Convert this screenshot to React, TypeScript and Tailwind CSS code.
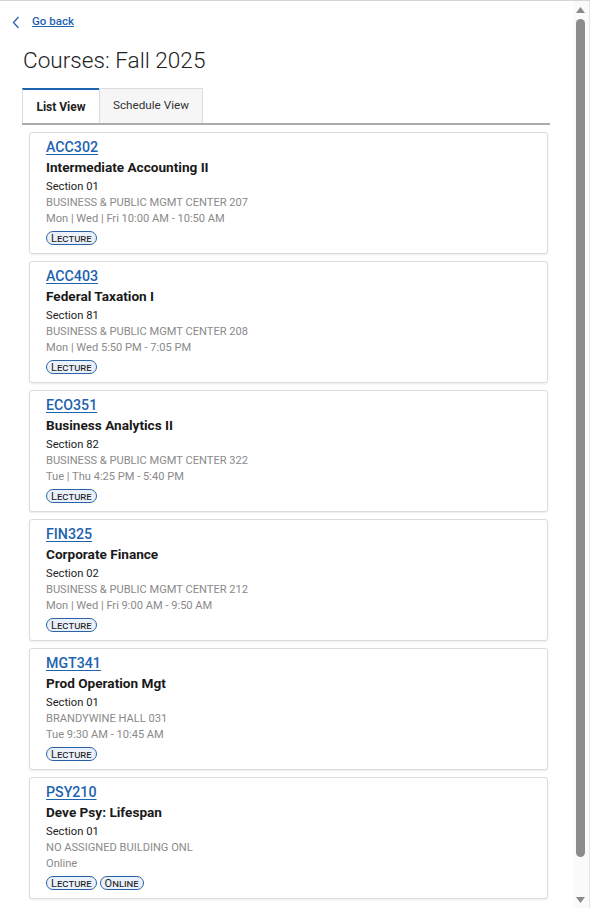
import React from 'react';

interface Course {
  code: string;
  title: string;
  section: string;
  building: string;
  time: string;
  tags: string[];
}

const courses: Course[] = [
  { code: 'ACC302', title: 'Intermediate Accounting II', section: 'Section 01', building: 'BUSINESS & PUBLIC MGMT CENTER 207', time: 'Mon | Wed | Fri 10:00 AM - 10:50 AM', tags: ['Lecture'] },
  { code: 'ACC403', title: 'Federal Taxation I', section: 'Section 81', building: 'BUSINESS & PUBLIC MGMT CENTER 208', time: 'Mon | Wed 5:50 PM - 7:05 PM', tags: ['Lecture'] },
  { code: 'ECO351', title: 'Business Analytics II', section: 'Section 82', building: 'BUSINESS & PUBLIC MGMT CENTER 322', time: 'Tue | Thu 4:25 PM - 5:40 PM', tags: ['Lecture'] },
  { code: 'FIN325', title: 'Corporate Finance', section: 'Section 02', building: 'BUSINESS & PUBLIC MGMT CENTER 212', time: 'Mon | Wed | Fri 9:00 AM - 9:50 AM', tags: ['Lecture'] },
  { code: 'MGT341', title: 'Prod Operation Mgt', section: 'Section 01', building: 'BRANDYWINE HALL 031', time: 'Tue 9:30 AM - 10:45 AM', tags: ['Lecture'] },
  { code: 'PSY210', title: 'Deve Psy: Lifespan', section: 'Section 01', building: 'NO ASSIGNED BUILDING ONL', time: 'Online', tags: ['Lecture', 'Online'] },
];

const Tag = ({ label }: { label: string }) => (
  <span className="inline-flex items-center h-[14px] px-[4px] rounded-full border border-[#2a62a8] bg-[#eaf1fa] text-[#222] text-[11px] leading-none [font-variant:small-caps]">
    {label}
  </span>
);

const CourseCard = ({ course }: { course: Course }) => (
  <div className="border border-[#dcdcdc] rounded-[3px] shadow-[0_1px_2px_rgba(0,0,0,0.08)] bg-white pl-[16px] pt-[4px] h-[122px]">
    <a href="#" className="block text-[14.2px] leading-[20px] font-medium text-[#1d63b0] underline underline-offset-2">
      {course.code}
    </a>
    <div className="text-[13.6px] leading-[20px] font-bold text-[#1a1a1a]">{course.title}</div>
    <div className="mt-[2px] text-[11.2px] leading-[16px] text-[#222]">{course.section}</div>
    <div className="text-[11.1px] leading-[16px] text-[#8a8a8a]">{course.building}</div>
    <div className="text-[11.1px] leading-[16px] text-[#8a8a8a]">{course.time}</div>
    <div className="flex gap-[3px] mt-[4px]">
      {course.tags.map((t) => (
        <Tag key={t} label={t} />
      ))}
    </div>
  </div>
);

export default function App() {
  return (
    <div className="h-[908px] w-[590px] overflow-hidden flex bg-white border-t border-[#d4d4d4] font-['Roboto',sans-serif]">
      <main className="flex-1 min-w-0">
        <div className="flex items-center pl-[12px] pt-[14px] h-[28px]">
          <svg width="8" height="13" viewBox="0 0 8 13" className="text-[#2a62a8]">
            <path d="M6.5 1 L1.5 6.5 L6.5 12" fill="none" stroke="currentColor" strokeWidth="1.3" />
          </svg>
          <a href="#" className="ml-[12px] text-[11.5px] font-medium text-[#1d63b0] underline">
            Go back
          </a>
        </div>
        <h1 className="ml-[23px] mt-[17px] text-[22.6px] leading-[30px] font-light text-[#222]">Courses: Fall 2025</h1>
        <div className="ml-[22px] mr-[23px] mt-[12px] flex border-b-2 border-[#ababab] h-[37px]">
          <button className="w-[77px] border-t-2 border-l border-[#1d63b0] border-l-[#dcdcdc] bg-white text-[12px] font-bold text-[#222]">
            List View
          </button>
          <button className="w-[104px] border border-b-0 border-[#dcdcdc] bg-[#f6f6f6] text-[11.7px] text-[#333]">
            Schedule View
          </button>
        </div>
        <div className="ml-[29px] mr-[25px] mt-[7px] flex flex-col gap-[7px]">
          {courses.map((c) => (
            <CourseCard key={c.code} course={c} />
          ))}
        </div>
      </main>
      <div className="w-[17px] flex flex-col items-center border-r border-[#e4e4e4] bg-[#fafafa] pr-[1px]">
        <svg width="9" height="6" viewBox="0 0 9 6" className="mt-[6px]">
          <path d="M4.5 0 L9 6 L0 6 Z" fill="#8a8a8a" />
        </svg>
        <div className="mt-[6px] w-[9px] h-[838px] rounded-full bg-[#8c8c8c]" />
        <div className="flex-1" />
        <svg width="9" height="6" viewBox="0 0 9 6" className="mb-[5px]">
          <path d="M0 0 L9 0 L4.5 6 Z" fill="#8a8a8a" />
        </svg>
      </div>
    </div>
  );
}
